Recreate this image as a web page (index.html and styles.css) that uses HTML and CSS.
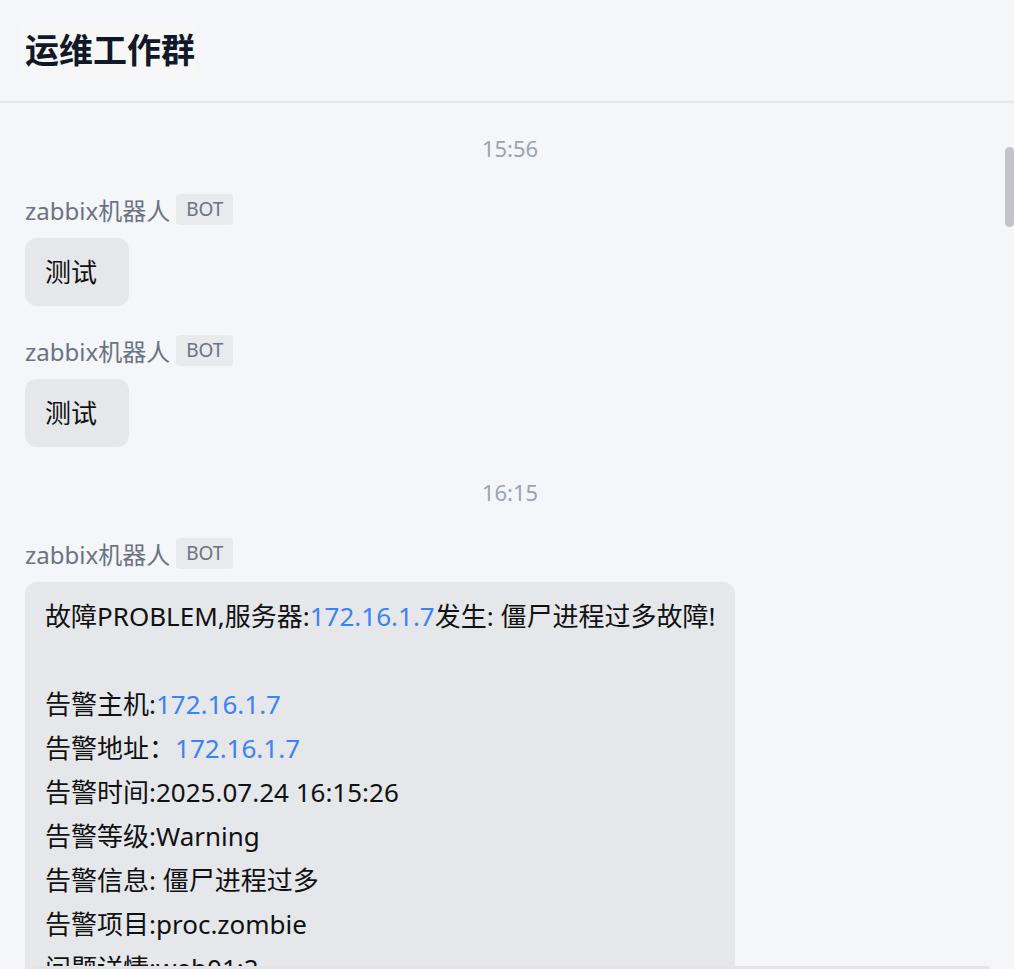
FILE: index.html
```html
<!DOCTYPE html>
<html lang="zh-CN">
<head>
  <meta charset="UTF-8" />
  <meta name="viewport" content="width=device-width, initial-scale=1" />
  <title>运维工作群</title>
  <link rel="stylesheet" href="styles.css">
</head>
<body>
  <div class="app">
    <header class="header">
      <h1 class="title">运维工作群</h1>
    </header>
    <main class="chat">
      <div class="time">15:56</div>
      <div class="msg">
        <div class="sender"><span class="name">zabbix机器人</span><span class="badge">BOT</span></div>
        <div class="bubble">测试</div>
      </div>
      <div class="msg">
        <div class="sender"><span class="name">zabbix机器人</span><span class="badge">BOT</span></div>
        <div class="bubble">测试</div>
      </div>
      <div class="time">16:15</div>
      <div class="msg">
        <div class="sender"><span class="name">zabbix机器人</span><span class="badge">BOT</span></div>
        <div class="bubble">
          <p>故障PROBLEM,服务器:<span class="ip">172.16.1.7</span>发生: 僵尸进程过多故障!</p>
          <p>&nbsp;</p>
          <p>告警主机:<span class="ip">172.16.1.7</span></p>
          <p>告警地址：<span class="ip">172.16.1.7</span></p>
          <p>告警时间:2025.07.24 16:15:26</p>
          <p>告警等级:Warning</p>
          <p>告警信息: 僵尸进程过多</p>
          <p>告警项目:proc.zombie</p>
          <p>问题详情:web01:2</p>
          <p>当前状态:PROBLEM:2</p>
          <p>事件ID:1024</p>
        </div>
      </div>
    </main>
  </div>
  <div class="scroll-thumb"></div>
  <div class="bottom-bar"></div>
</body>
</html>
```

FILE: styles.css
```css
body { margin: 0; background: #f5f6fa; font-family: "Noto Sans", "Noto Sans CJK SC", sans-serif; color: #111; overflow: hidden; }
.app { height: 100vh; display: flex; flex-direction: column; }
.header { height: 101px; flex-shrink: 0; display: flex; align-items: center; padding: 0 22px; border-bottom: 2px solid #e5e7eb; }
.title { margin: 0; font-size: 34px; font-weight: 700; line-height: 55px; padding: 0 3px; background: #f7f7f8; color: #111827; }
.chat { flex: 1; overflow: hidden; padding: 0 19px 0 25px; }
.time { text-align: center; color: #9ca3af; font-size: 22px; line-height: 28px; margin: 31px 0 32px; }
.msg { margin-bottom: 29px; }
.sender { display: flex; align-items: center; gap: 6px; height: 31px; }
.name { font-size: 24px; color: #6b7280; }
.badge { background: #e9eaee; color: #6b7280; font-size: 19px; line-height: 31px; padding: 0 10px; border-radius: 4px; }
.bubble { margin-top: 13px; width: fit-content; min-width: 64px; background: #e5e7eb; border-radius: 12px; padding: 12px 20px; font-size: 26px; line-height: 44px; color: #111; }
.bubble p { margin: 0; white-space: nowrap; }
.ip { color: #3b82f6; }
.scroll-thumb { position: fixed; right: 0; top: 147px; width: 9px; height: 80px; background: #c1c3c8; border-radius: 5px; }
.bottom-bar { position: fixed; left: 30px; bottom: 0; width: 960px; height: 3px; background: #e3e4e8; border-radius: 3px 3px 0 0; }
```
